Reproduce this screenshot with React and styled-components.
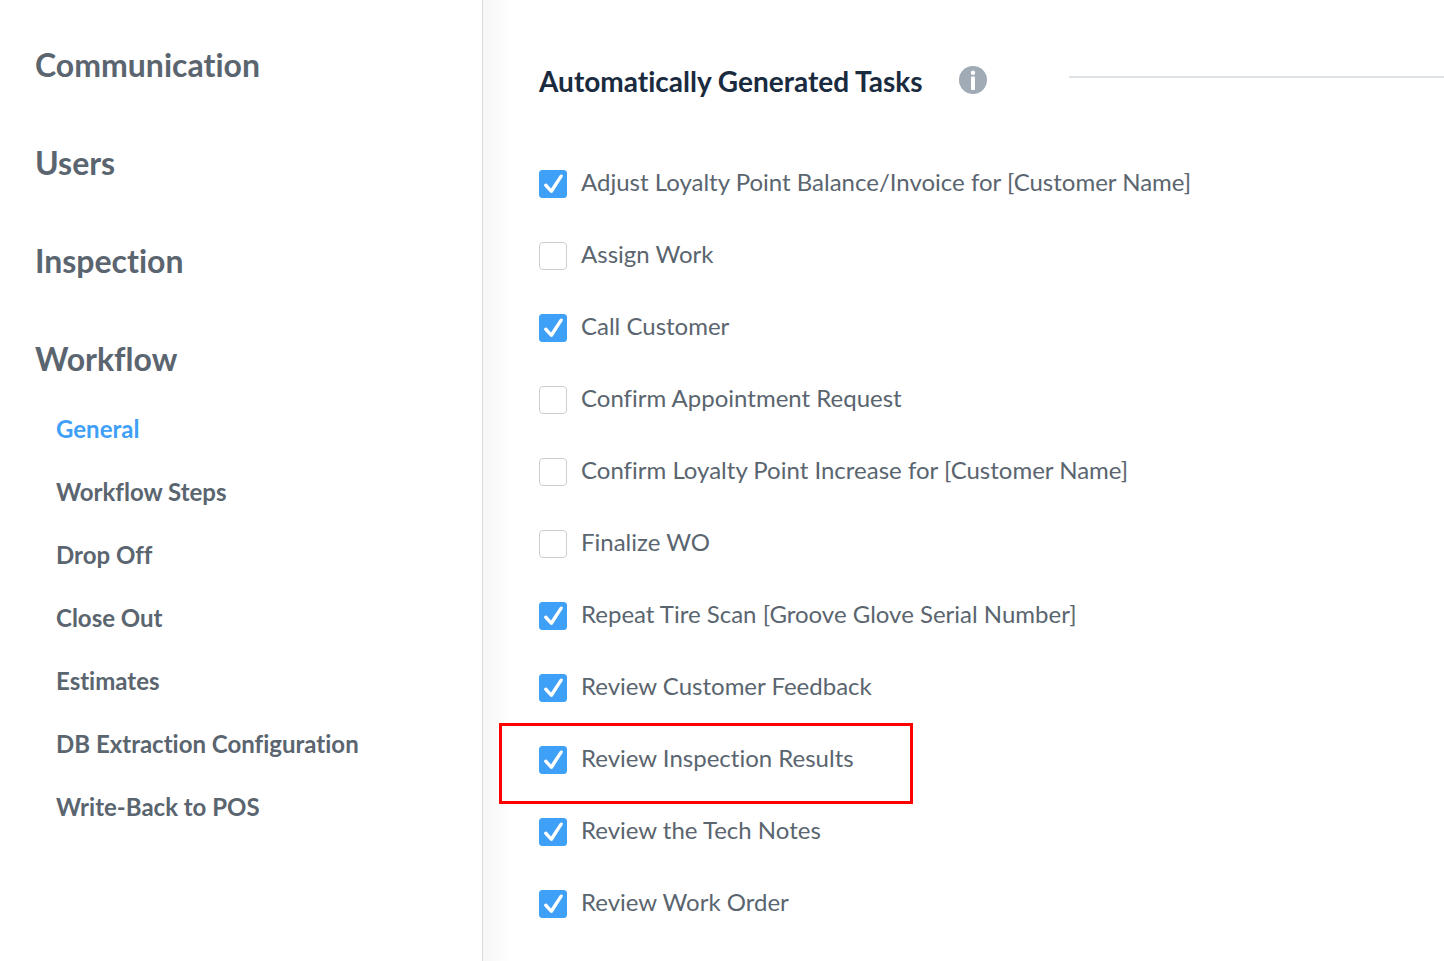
import React, { useState } from "react";
import styled, { createGlobalStyle } from "styled-components";

const sections = [
  { title: "Communication" },
  { title: "Users" },
  { title: "Inspection" },
  {
    title: "Workflow",
    items: [
      "General",
      "Workflow Steps",
      "Drop Off",
      "Close Out",
      "Estimates",
      "DB Extraction Configuration",
      "Write-Back to POS",
    ],
  },
];

const initialTasks = [
  { id: 1, name: "Adjust Loyalty Point Balance/Invoice for [Customer Name]", checked: true },
  { id: 2, name: "Assign Work", checked: false },
  { id: 3, name: "Call Customer", checked: true },
  { id: 4, name: "Confirm Appointment Request", checked: false },
  { id: 5, name: "Confirm Loyalty Point Increase for [Customer Name]", checked: false },
  { id: 6, name: "Finalize WO", checked: false },
  { id: 7, name: "Repeat Tire Scan [Groove Glove Serial Number]", checked: true },
  { id: 8, name: "Review Customer Feedback", checked: true },
  { id: 9, name: "Review Inspection Results", checked: true, highlighted: true },
  { id: 10, name: "Review the Tech Notes", checked: true },
  { id: 11, name: "Review Work Order", checked: true },
];

function Sidebar({ active }) {
  return (
    <StyledSidebar>
      {sections.map((section) => (
        <div key={section.title}>
          <StyledSectionLink href="#">{section.title}</StyledSectionLink>
          {section.items && (
            <StyledSubList>
              {section.items.map((item) => (
                <li key={item}>
                  <StyledSubLink href="#" $active={item === active}>
                    {item}
                  </StyledSubLink>
                </li>
              ))}
            </StyledSubList>
          )}
        </div>
      ))}
    </StyledSidebar>
  );
}

function TaskItem({ task, onToggleHandler }) {
  const inputId = `task-${task.id}`;
  return (
    <StyledTask>
      <StyledCheck>
        <StyledCheckbox
          id={inputId}
          type="checkbox"
          checked={task.checked}
          onChange={() => onToggleHandler(task.id)}
        />
        {task.checked && (
          <StyledTick viewBox="0 0 28 28" aria-hidden="true">
            <path d="M5.2 14.6 C6 13.4 7.3 13.2 8.3 14.3 L12 18.4 L20.8 5.2 C21.8 3.8 24.6 4.6 23.8 6.4 L14 22 C13.2 23.3 12 23.3 11 22.2 L5.6 16.4 C5.1 15.8 4.9 15.2 5.2 14.6 Z" />
          </StyledTick>
        )}
      </StyledCheck>
      <StyledLabel htmlFor={inputId}>{task.name}</StyledLabel>
      {task.highlighted && <StyledHighlight />}
    </StyledTask>
  );
}

function App() {
  const [tasks, setTasks] = useState(initialTasks);

  const onToggleHandler = (id) => {
    setTasks(
      tasks.map((task) =>
        task.id === id ? { ...task, checked: !task.checked } : task
      )
    );
  };

  return (
    <>
      <GlobalStyle />
      <StyledPage>
        <Sidebar active="General" />
        <StyledMain>
          <StyledHeader>
            <StyledTitle>Automatically Generated Tasks</StyledTitle>
            <StyledInfoButton type="button" aria-label="Info">
              <svg viewBox="0 0 28 28" width="28" height="28">
                <circle cx="14" cy="14" r="14" fill="#a0abb6" />
                <circle cx="14" cy="6.8" r="2.2" fill="#fff" />
                <rect x="12" y="10.4" width="4" height="13.6" rx="0.8" fill="#fff" />
              </svg>
            </StyledInfoButton>
            <StyledRule />
          </StyledHeader>
          <StyledTaskList>
            {tasks.map((task) => (
              <TaskItem key={task.id} task={task} onToggleHandler={onToggleHandler} />
            ))}
          </StyledTaskList>
        </StyledMain>
      </StyledPage>
    </>
  );
}

const GlobalStyle = createGlobalStyle`
  * {
    box-sizing: border-box;
  }

  body {
    margin: 0;
    background: #fff;
    color: #5a656f;
    font-family: "Proxima Nova", Lato, sans-serif;
    font-variant-ligatures: none;
  }
`;

const StyledPage = styled.div`
  display: flex;
  min-height: 100vh;
`;

const StyledSidebar = styled.nav`
  flex: 0 0 483px;
  padding: 16px 35px;
  border-right: 1px solid #dcdcdc;
`;

const StyledSectionLink = styled.a`
  display: block;
  color: #5a656f;
  font-size: 32px;
  font-weight: 700;
  line-height: 98px;
  text-decoration: none;
`;

const StyledSubList = styled.ul`
  margin: -11px 0 0;
  padding: 0 0 0 21px;
  list-style: none;
`;

const StyledSubLink = styled.a`
  display: block;
  color: ${({ $active }) => ($active ? "#3fa0f7" : "#5a656f")};
  font-size: 24px;
  font-weight: 700;
  line-height: 63px;
  text-decoration: none;
`;

const StyledMain = styled.main`
  flex: 1;
  min-width: 0;
  padding: 60px 0 0 56px;
  background: linear-gradient(to right, #f6f6f6, #fff 28px);
`;

const StyledHeader = styled.header`
  display: flex;
  align-items: center;
  height: 40px;
`;

const StyledTitle = styled.h2`
  min-width: 393px;
  margin: 0;
  padding-top: 2px;
  color: #1a2b3f;
  font-size: 28px;
  font-weight: 700;
  line-height: 40px;
  white-space: nowrap;
`;

const StyledInfoButton = styled.button`
  display: flex;
  margin: 0 82px 0 27px;
  padding: 0;
  border: 0;
  background: none;
  cursor: pointer;
`;

const StyledRule = styled.hr`
  flex: 1;
  margin: 0 0 6px;
  border: 0;
  border-top: 2px solid #dde2e6;
`;

const StyledTaskList = styled.ul`
  margin: 0;
  padding: 48px 0 0;
  list-style: none;
`;

const StyledTask = styled.li`
  position: relative;
  display: flex;
  align-items: center;
  gap: 14px;
  height: 72px;
`;

const StyledCheck = styled.span`
  position: relative;
  display: flex;
`;

const StyledCheckbox = styled.input`
  appearance: none;
  width: 28px;
  height: 28px;
  margin: 0;
  border: 1px solid #cfcfcf;
  border-radius: 4px;
  background: #fff;
  cursor: pointer;

  &:checked {
    border-color: #3fa0f7;
    border-radius: 3px;
    background: #3fa0f7;
  }
`;

const StyledTick = styled.svg`
  position: absolute;
  inset: 0;
  fill: #fff;
  pointer-events: none;
`;

const StyledLabel = styled.label`
  padding-bottom: 5px;
  font-size: 24px;
  line-height: 32px;
  cursor: pointer;
`;

const StyledHighlight = styled.span`
  position: absolute;
  top: -1px;
  left: -40px;
  width: 414px;
  height: 81px;
  border: 3px solid #f00;
  pointer-events: none;
`;

export default App;
